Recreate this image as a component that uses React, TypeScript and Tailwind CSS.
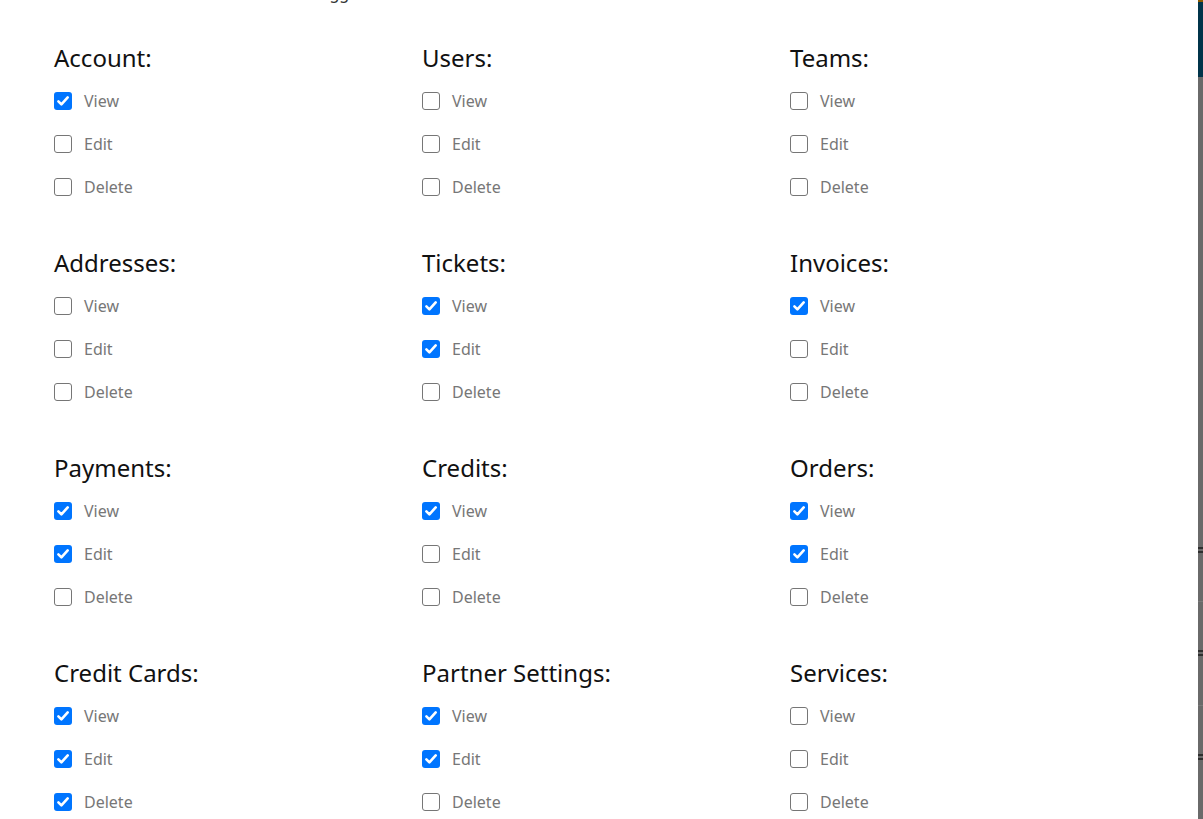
import React from 'react';

type Perm = { name: string; view: boolean; edit: boolean; del: boolean };

const SECTIONS: Perm[] = [
  { name: 'Account', view: true, edit: false, del: false },
  { name: 'Users', view: false, edit: false, del: false },
  { name: 'Teams', view: false, edit: false, del: false },
  { name: 'Addresses', view: false, edit: false, del: false },
  { name: 'Tickets', view: true, edit: true, del: false },
  { name: 'Invoices', view: true, edit: false, del: false },
  { name: 'Payments', view: true, edit: true, del: false },
  { name: 'Credits', view: true, edit: false, del: false },
  { name: 'Orders', view: true, edit: true, del: false },
  { name: 'Credit Cards', view: true, edit: true, del: true },
  { name: 'Partner Settings', view: true, edit: true, del: false },
  { name: 'Services', view: false, edit: false, del: false },
];

function Check({ label, checked }: { label: string; checked: boolean }) {
  return (
    <label className="flex h-[43px] items-center gap-3">
      <span
        className={
          checked
            ? 'flex h-[18px] w-[18px] items-center justify-center rounded-[3px] bg-[#0075ff]'
            : 'h-[18px] w-[18px] rounded-[3px] border border-[#767676] bg-white'
        }
      >
        {checked && (
          <svg viewBox="0 0 16 16" className="h-[16px] w-[16px]">
            <path
              d="M3.4 8.3 6.4 11.3 12.7 4.4"
              fill="none"
              stroke="white"
              strokeWidth="2.6"
              strokeLinecap="round"
              strokeLinejoin="round"
            />
          </svg>
        )}
      </span>
      <span className="text-[16px] text-[#777]">{label}</span>
    </label>
  );
}

// small grip marks on the scrollbar-like strip at the right edge
function Grip() {
  return (
    <div className="flex flex-col gap-[2px]">
      <div className="h-[2px] bg-[#2e2e2e]" />
      <div className="h-[2px] bg-[#2e2e2e]" />
    </div>
  );
}

export default function App() {
  return (
    <div
      className="flex h-[819px] w-[1203px] overflow-hidden bg-white"
      style={{ fontFamily: '"Noto Sans", "Open Sans", sans-serif' }}
    >
      <main className="flex-1 pl-[54px]">
        <p className="-mt-[18px] -ml-[5px] h-[22px] text-[16px] leading-[22px] text-[#333]">
          Pick what each role can access and toggle
        </p>
        <div className="mt-[38px] grid grid-cols-[368px_368px_368px] gap-y-[39px]">
          {SECTIONS.map((s) => (
            <section key={s.name}>
              <h3 className="h-8 text-[24px] leading-8 text-[#111]">{s.name}:</h3>
              <div className="mt-[5px]">
                <Check label="View" checked={s.view} />
                <Check label="Edit" checked={s.edit} />
                <Check label="Delete" checked={s.del} />
              </div>
            </section>
          ))}
        </div>
      </main>
      <aside className="flex w-[5px] flex-col">
        <div className="h-[2px] bg-[#8a5a00]" />
        <div className="h-[75px] bg-[#00344a]" />
        <div className="flex flex-1 flex-col bg-[#6a6a6a]">
          <div className="h-[470px]" />
          <Grip />
          <div className="h-[48px]" />
          <div className="h-[104px] border-t border-[#7a7a7a]">
            <div className="h-[48px]" />
            <Grip />
          </div>
          <div className="h-[104px] border-t border-[#7a7a7a]">
            <div className="h-[48px]" />
            <Grip />
          </div>
        </div>
      </aside>
    </div>
  );
}
